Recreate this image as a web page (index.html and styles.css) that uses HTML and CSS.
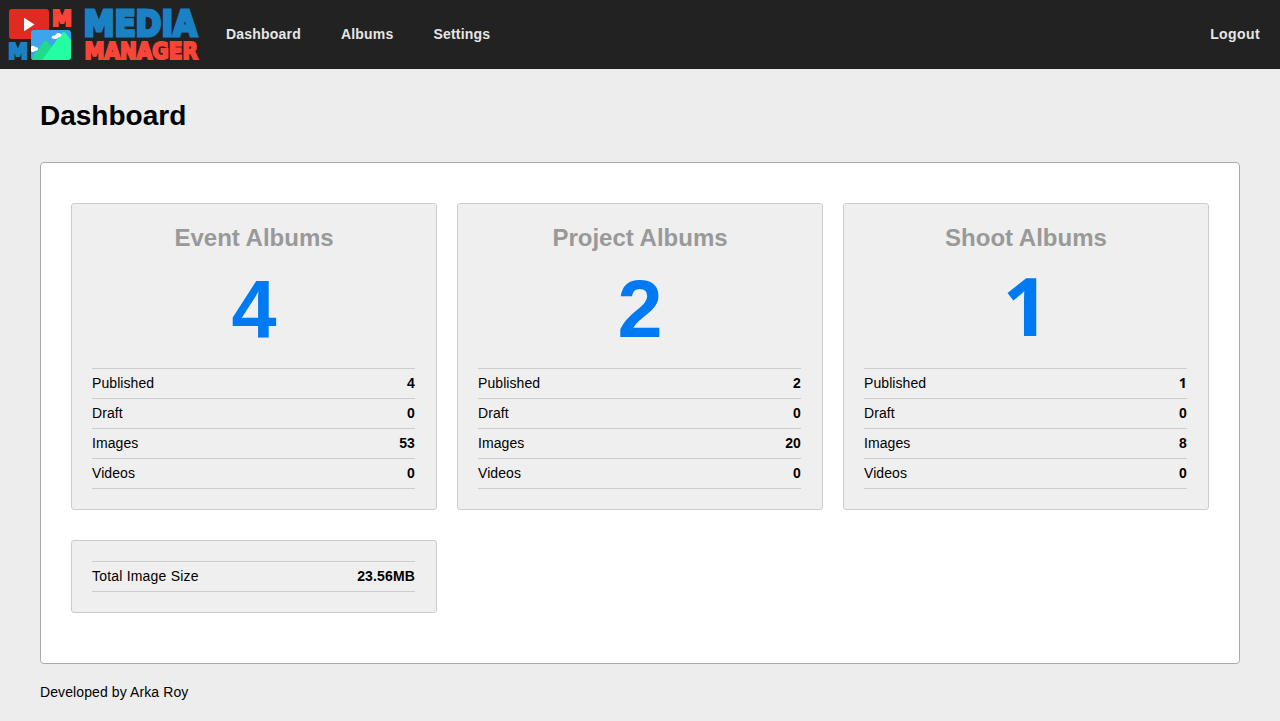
FILE: index.html
```html
<!DOCTYPE html>
<html lang="en">
<head>
<meta charset="utf-8">
<title>Media Manager - Dashboard</title>
<link rel="stylesheet" href="styles.css">
</head>
<body>
<header class="topbar">
  <svg class="logo" width="200" height="69" viewBox="0 0 200 69" role="img" aria-label="Media Manager">
    <rect x="9" y="9" width="40" height="30" rx="3" fill="#df2b20"/>
    <path d="M24 17.8v13.4L34.5 24.5z" fill="#fff"/>
    <text class="logo-type red" x="52" y="25.800" font-size="21.500" textLength="20" lengthAdjust="spacingAndGlyphs">M</text>
    <text class="logo-type blue" x="8" y="58.800" font-size="21.500" textLength="20" lengthAdjust="spacingAndGlyphs">M</text>
    <clipPath id="photo"><rect x="31" y="30" width="40" height="30" rx="3"/></clipPath>
    <g clip-path="url(#photo)">
      <rect x="31" y="30" width="40" height="30" fill="#3fa4ee"/>
      <path d="M31 59L44 41.500q1.700-2 3.400 0l6.600 8.500v10H31z" fill="#1fdb8c"/>
      <path d="M42 60L61.500 33.500q2.200-3 4.400 0l6 8V60z" fill="#24fda2"/>
      <path d="M53 38.500q-2 0-1-2 1-1.500 3-1 1-3 4-2.500l2 1q1 2-1 3-2 0-2 1-2 1.500-5 .5z" fill="#fff"/>
      <path d="M31 46.500q3-1.500 4 .5 3.500 0 3 2.200-.5 1.800-3 1.800-2 1.500-4 .5z" fill="#fff"/>
    </g>
    <text class="logo-type large blue" x="83.500" y="35.500" font-size="35" textLength="113.500" lengthAdjust="spacingAndGlyphs">MEDIA</text>
    <text class="logo-type red" x="84.500" y="59" font-size="23.500" textLength="113.500" lengthAdjust="spacingAndGlyphs">MANAGER</text>
  </svg>
  <nav class="nav">
    <a class="nav-link">Dashboard</a>
    <a class="nav-link">Albums</a>
    <a class="nav-link">Settings</a>
  </nav>
  <a class="nav-link logout">Logout</a>
</header>
<main class="page">
  <h1 class="title">Dashboard</h1>
  <section class="panel">
    <article class="card">
      <h2 class="card-title">Event Albums</h2>
      <div class="count">4</div>
      <dl class="stats">
        <div class="row"><dt>Published</dt><dd>4</dd></div>
        <div class="row"><dt>Draft</dt><dd>0</dd></div>
        <div class="row"><dt>Images</dt><dd>53</dd></div>
        <div class="row"><dt>Videos</dt><dd>0</dd></div>
      </dl>
    </article>
    <article class="card">
      <h2 class="card-title">Project Albums</h2>
      <div class="count">2</div>
      <dl class="stats">
        <div class="row"><dt>Published</dt><dd>2</dd></div>
        <div class="row"><dt>Draft</dt><dd>0</dd></div>
        <div class="row"><dt>Images</dt><dd>20</dd></div>
        <div class="row"><dt>Videos</dt><dd>0</dd></div>
      </dl>
    </article>
    <article class="card">
      <h2 class="card-title">Shoot Albums</h2>
      <div class="count plain-one">1</div>
      <dl class="stats">
        <div class="row"><dt>Published</dt><dd class="plain-one">1</dd></div>
        <div class="row"><dt>Draft</dt><dd>0</dd></div>
        <div class="row"><dt>Images</dt><dd>8</dd></div>
        <div class="row"><dt>Videos</dt><dd>0</dd></div>
      </dl>
    </article>
    <article class="card">
      <dl class="stats">
        <div class="row"><dt class="wide">Total Image Size</dt><dd>23.56MB</dd></div>
      </dl>
    </article>
  </section>
  <footer class="footer">Developed by Arka Roy</footer>
</main>
</body>
</html>
```
FILE: styles.css
```css
* { box-sizing: border-box; }

body {
  margin: 0;
  background: #ededed;
  color: #000;
  font: 14px/20px "Liberation Sans", Arial, sans-serif;
}

.topbar {
  display: flex;
  align-items: center;
  height: 69px;
  padding-right: 20px;
  background: #222;
}

.logo { display: block; }

.logo-type {
  font-family: "DejaVu Sans", sans-serif;
  font-weight: bold;
  stroke-width: 2.2;
  stroke-linejoin: miter;
}

.large { stroke-width: 3.2; }

.blue { fill: #1b81c5; stroke: #1b81c5; }
.red { fill: #f94438; stroke: #f94438; }

.nav {
  display: flex;
  gap: 40px;
  margin-left: 26px;
}

.nav-link {
  padding-bottom: 2px;
  color: #e6e6e6;
  font-weight: bold;
  letter-spacing: 0.2px;
}

.logout {
  margin-left: auto;
  letter-spacing: 0.4px;
}

.page { padding: 27px 40px 0; }

.title {
  margin: 0 0 26px;
  font-size: 28px;
  line-height: 40px;
}

.panel {
  display: grid;
  grid-template-columns: repeat(3, 1fr);
  gap: 30px 20px;
  padding: 40px 30px 50px;
  background: #fff;
  border: 1px solid #aaa;
  border-radius: 4px;
}

.card {
  padding: 20px;
  background: #efefef;
  border: 1px solid #ccc;
  border-radius: 3px;
}

.card-title {
  margin: 0;
  color: #999;
  font-size: 24px;
  line-height: 28px;
  text-align: center;
}

.count {
  margin: 12px 0 14px;
  color: #007af3;
  font-size: 81px;
  font-weight: bold;
  line-height: 90px;
  text-align: center;
}

.plain-one { font-family: "Open Sans", sans-serif; }

.count.plain-one {
  margin-bottom: 22px;
  line-height: 82px;
}

.stats {
  margin: 0 1px 0 0;
  border-top: 1px solid #ccc;
}

.row {
  display: flex;
  justify-content: space-between;
  height: 30px;
  padding-top: 4px;
  border-bottom: 1px solid #ccc;
}

.row dt { letter-spacing: 0.08px; }

.row dt.wide { letter-spacing: 0.2px; }

.row dd {
  margin: 0;
  font-weight: bold;
  letter-spacing: 0.15px;
}

.footer {
  padding-top: 18px;
  letter-spacing: 0.1px;
}
```
